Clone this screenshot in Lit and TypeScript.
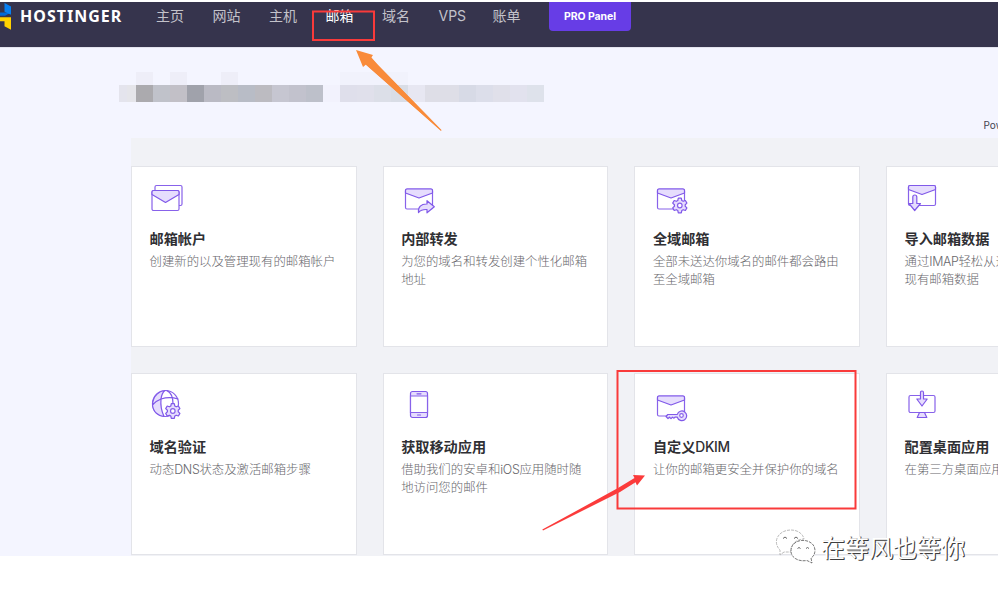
import { LitElement, html, svg, css } from "lit";
import { customElement } from "lit/decorators.js";

const gear = svg`<path class="f" d="M22.3 17.5l.5-2.3h3l.5 2.3 1.4.8 2.2-.8 1.5 2.6-1.7 1.6v1.6l1.7 1.6-1.5 2.6-2.2-.8-1.4.8-.5 2.3h-3l-.5-2.3-1.4-.8-2.2.8-1.5-2.6 1.7-1.6v-1.6l-1.7-1.6 1.5-2.6 2.2.8z"/><circle class="w" cx="24.3" cy="22.5" r="2.3"/>`;
const envelope = svg`<rect class="w" x="2.5" y="6" width="27" height="20" rx="1.5"/><path class="f" d="M2.5 10V7.5Q2.5 6 4 6h24q1.500 0 1.500 1.500V10L16 15z"/>`;

const icons: Record<string, unknown> = {
  accounts: svg`<rect class="w" x="5" y="2.500" width="27" height="20" rx="1.500"/><rect class="w" x="2" y="7.500" width="27" height="20" rx="1.500"/><path class="f" d="M2 11.500V9Q2 7.500 3.500 7.500h24Q29 7.500 29 9v2.500L15.500 19.500z"/>`,
  forward: svg`${envelope}<path class="f" d="M15.500 29.500c-.6-5.500 2.500-8.700 8.500-8.500v-3.300l7.300 6.100-7.300 6v-3.300c-4-.2-6.300.4-8.500 3z"/>`,
  gear: svg`${envelope}<g transform="translate(.5 0)">${gear}</g>`,
  import: svg`<rect class="w" x="1.500" y="2.500" width="27" height="20" rx="1.500"/><path class="f" d="M1.500 6.500V4Q1.500 2.500 3 2.500h24q1.500 0 1.500 1.500v2.500L15 11.500z"/><path class="f" d="M5.800 20.500v-6.500q0-2 2-2t2 2v6.500h3.700L7.700 27.500 2 20.500z"/>`,
  globe: svg`<circle class="w" cx="15.500" cy="13.500" r="13"/><path class="f" d="M15 .5C10 1 3 5 2.500 15c3-4 6-5 8.500-6C11.500 5 13 2 15 .5zM11 9c-3 1-6 3-8.500 6 .5 7 6 11 11.500 11.500C11 20 10.500 14 11 9z"/><path class="n" d="M11 9c6-2 11-2 17 0M17 .6c4 2 6 7 6 13"/><g transform="translate(-1.500 -1.500)">${gear}</g>`,
  phone: svg`<rect class="f" x="7.500" y="1.500" width="17" height="26" rx="2"/><path class="w" d="M7.500 6h17v16.500h-17z"/><path class="n" d="M14 3.800h4M14.500 25h3"/>`,
  key: svg`${envelope}<path class="f" d="M22.300 24.400a4.800 4.800 0 1 1 0 2.800H20l-1 1-1.500-1-1.500 1.500-1.500-1.500-1.500 1.300-2-2 1.800-2z"/><circle class="w" cx="26.500" cy="25.500" r="1.800"/>`,
  desktop: svg`<rect class="w" x="2" y="5.500" width="26" height="17" rx="1.500"/><path class="f" d="M13.500 9V2.800Q13.500 1 15 1t1.500 1.800V9h3.700L15 16l-5.200-7zM12.500 22.500h5l2.300 5h-9.600z"/>`,
};

interface Card {
  icon: string;
  title: string;
  lines: string[];
}

const cards: Card[] = [
  { icon: "accounts", title: "邮箱帐户", lines: ["创建新的以及管理现有的邮箱帐户"] },
  { icon: "forward", title: "内部转发", lines: ["为您的域名和转发创建个性化邮箱", "地址"] },
  { icon: "gear", title: "全域邮箱", lines: ["全部未送达你域名的邮件都会路由", "至全域邮箱"] },
  { icon: "import", title: "导入邮箱数据", lines: ["通过IMAP轻松从远", "现有邮箱数据"] },
  { icon: "globe", title: "域名验证", lines: ["动态DNS状态及激活邮箱步骤"] },
  { icon: "phone", title: "获取移动应用", lines: ["借助我们的安卓和iOS应用随时随", "地访问您的邮件"] },
  { icon: "key", title: "自定义DKIM", lines: ["让你的邮箱更安全并保护你的域名"] },
  { icon: "desktop", title: "配置桌面应用", lines: ["在第三方桌面应用"] },
];

const navItems = ["主页", "网站", "主机", "邮箱", "域名", "VPS", "账单"];

const domainBlocks = ["#abaaae", "#c0c2ca", "#c2c0c7", "#a0a2ab", "#babac4", "#bdbec3", "#b8bcc6", "#bcbbc1", "#c6c6d1", "#c2c2cd", "#bdc0ca"];
const detailBlocks = ["#dfdfeb", "#e0e0eb", "#dcdfe8", "#d9dde6", "#e7e7f2", "#dedee7", "#dedee7", "#d7dae6", "#dcdeea", "#e0e0ea", "#e2e2ee", "#dee2eb"];

@customElement("app-root")
export class AppRoot extends LitElement {
  static styles = css`
    :host {
      display: block;
      position: relative;
      width: 998px;
      height: 592px;
      overflow: hidden;
      background: #fff;
      font-family: Inter, "Noto Sans CJK SC", sans-serif;
    }
    .nav {
      display: flex;
      align-items: flex-start;
      margin-top: 2px;
      height: 45px;
      background: #36344d;
      color: #c3c2ca;
      font-size: 14px;
      line-height: 28px;
      white-space: nowrap;
    }
    .mark { width: 13px; height: 30px; flex: none; }
    .brand {
      padding-left: 7px;
      width: 136px;
      color: #fff;
      font: 700 16px/29px "Noto Sans", sans-serif;
      letter-spacing: 1px;
      flex: none;
    }
    .links { display: flex; gap: 28.500px; flex: none; width: 393px; }
    .on { color: #fff; }
    .vps { width: 25.500px; }
    .pro {
      width: 82px;
      height: 29px;
      border-radius: 0 0 4px 4px;
      background: #673de6;
      color: #fff;
      font: 700 10.500px/29px Inter, sans-serif;
      text-align: center;
      letter-spacing: -0.1px;
    }
    .page { display: flow-root; height: 509px; background: #f4f5ff; box-shadow: inset 0 1px #e3e3ee; }
    .censor { display: flex; margin: 24px 0 0 119px; height: 31px; align-items: flex-end; }
    .block { width: 17px; height: 17px; flex: none; }
    .half { background: linear-gradient(90deg, #e4e4ed 50%, #e5e5ea 50%); }
    .tall { box-shadow: 0 -13px #eeeef8; }
    .haze { box-shadow: 0 -13px #f1f2fc; }
    .gap { background: #f2f2fd; }
    .powered { height: 12px; margin: 17px 0 0 983.500px; font-size: 10px; line-height: 12px; color: #45444f; white-space: nowrap; }
    .panel {
      margin: 7px 0 0 131px;
      width: 1007px;
      height: 418px;
      box-sizing: border-box;
      padding-top: 28px;
      background: #f1f2f6;
      display: grid;
      grid-template-columns: repeat(4, 225.700px);
      grid-template-rows: 181px 182px;
      gap: 26px;
    }
    .card {
      box-sizing: border-box;
      border: 1px solid #e3e4e9;
      background: #fff;
      padding: 16px 0 0 17.500px;
      white-space: nowrap;
    }
    .icon { display: block; width: 34px; height: 33px; overflow: visible; margin-left: 2px; }
    .flush { margin-left: 0; }
    .f { fill: #e6ddfd; stroke: #8059e9; stroke-width: 1.200; stroke-linejoin: round; }
    .w { fill: #fff; stroke: #8862ea; stroke-width: 1.200; }
    .n { fill: none; stroke: #8059e9; stroke-width: 1.200; stroke-linecap: round; }
    .title { margin: 12px 0 3px; font-size: 14.150px; font-weight: 700; line-height: 22px; color: #2f2f33; }
    .card:nth-child(n + 5) .title { margin-top: 13px; }
    .latin { font-weight: 500; font-size: 13.800px; letter-spacing: -0.35px; }
    .text { font-size: 12.400px; line-height: 18px; color: #68676c; font-weight: 300; }
    .en { letter-spacing: -0.35px; }
    .overlay { position: absolute; left: 0; top: 0; width: 998px; height: 592px; }
    .watermark { position: absolute; left: 821px; top: 529px; font: 400 24px/36px "Noto Sans CJK SC", sans-serif; color: #fff; text-shadow: 1px 1px 0 #3e3e3e, 1px 0 0 #777; white-space: nowrap; }
  `;

  renderMixed(text: string, cls: string) {
    return text
      .split(/([A-Za-z]+)/)
      .filter((part) => part)
      .map((part) => (/^[A-Za-z]/.test(part) ? html`<span class=${cls}>${part}</span>` : part));
  }

  render() {
    return html`
      <header class="nav">
        <svg class="mark" viewBox="0 2 13 30">
          <path fill="#0068d6" d="M0 12.500h11L5 15.800H0z"/>
          <path fill="#0780f2" d="M4.500 3l6.500 3.500v8.200l-6.500-3z"/>
          <path fill="#ffd200" d="M0 17.200h11v12.600l-6.500-3.500v-5H0z"/>
        </svg>
        <div class="brand">HOSTINGER</div>
        <nav class="links">${navItems.map((n) => html`<span class=${n === "邮箱" ? "on" : n === "VPS" ? "vps" : ""}>${n}</span>`)}</nav>
        <div class="pro">PRO Panel</div>
      </header>
      <main class="page">
        <div class="censor">
          <div class="block half"></div>
          ${domainBlocks.map((c, i) => html`<div class="block ${[0, 2, 5].includes(i) ? "tall" : ""}" style="background:${c}"></div>`)}
          <div class="block gap"></div>
          ${detailBlocks.map((c, i) => html`<div class="block ${i < 4 ? "haze" : ""}" style="background:${c}"></div>`)}
        </div>
        <div class="powered">Pow</div>
        <section class="panel">
          ${cards.map((c) => html`<article class="card">
            <svg class="icon ${c.icon === "accounts" || c.icon === "globe" ? "flush" : ""}" viewBox="0 0 34 33">${icons[c.icon]}</svg>
            <div class="title">${this.renderMixed(c.title, "latin")}</div>
            ${c.lines.map((l) => html`<div class="text">${this.renderMixed(l, "en")}</div>`)}
          </article>`)}
        </section>
      </main>
      <svg class="overlay" viewBox="0 0 998 592">
        <g fill="none" stroke="#f93a3a" stroke-width="2">
          <rect x="313" y="11.500" width="61" height="28.500"/>
          <rect x="617.500" y="371" width="238" height="137.500"/>
        </g>
        <path fill="#f98b3a" d="M356 50l17 5-2 3L441.500 130l-.5 1L366 64.500l-3 2.500z"/>
        <path fill="#f98b3a" d="M371 57l7 8 63.500 65.500-4-3L365 64z"/>
        <path fill="#fb3b3b" d="M645 475.500l-8 10-1.500-3.200L620 492 543 530.500l-.7-.9L618 488l16.500-10-1.500-3z"/>
        <g fill="#fff" stroke="#777" stroke-width=".8" stroke-dasharray="3 1">
          <path stroke="#aaa" d="M784 552l-4 3 0-5c-8-8-2-20 11-20 7 0 12 4 13 9-8 0-14 6-13 13z"/>
          <path stroke="#555" d="M791 551c0-14 23-14 24-1 0 4-2 7-4 8l1 5-5-2.500c-9 1.500-16-3-16-9.500z"/>
        </g>
        <g fill="none" stroke="#666"><path d="M783 538.500q2-3 4 0M794 538.500q2-3 4 0M797.500 548.500q1.500-2 3 0M806 548.500q1.500-2 3 0"/></g>
      </svg>
      <div class="watermark">在等风也等你</div>
    `;
  }
}
